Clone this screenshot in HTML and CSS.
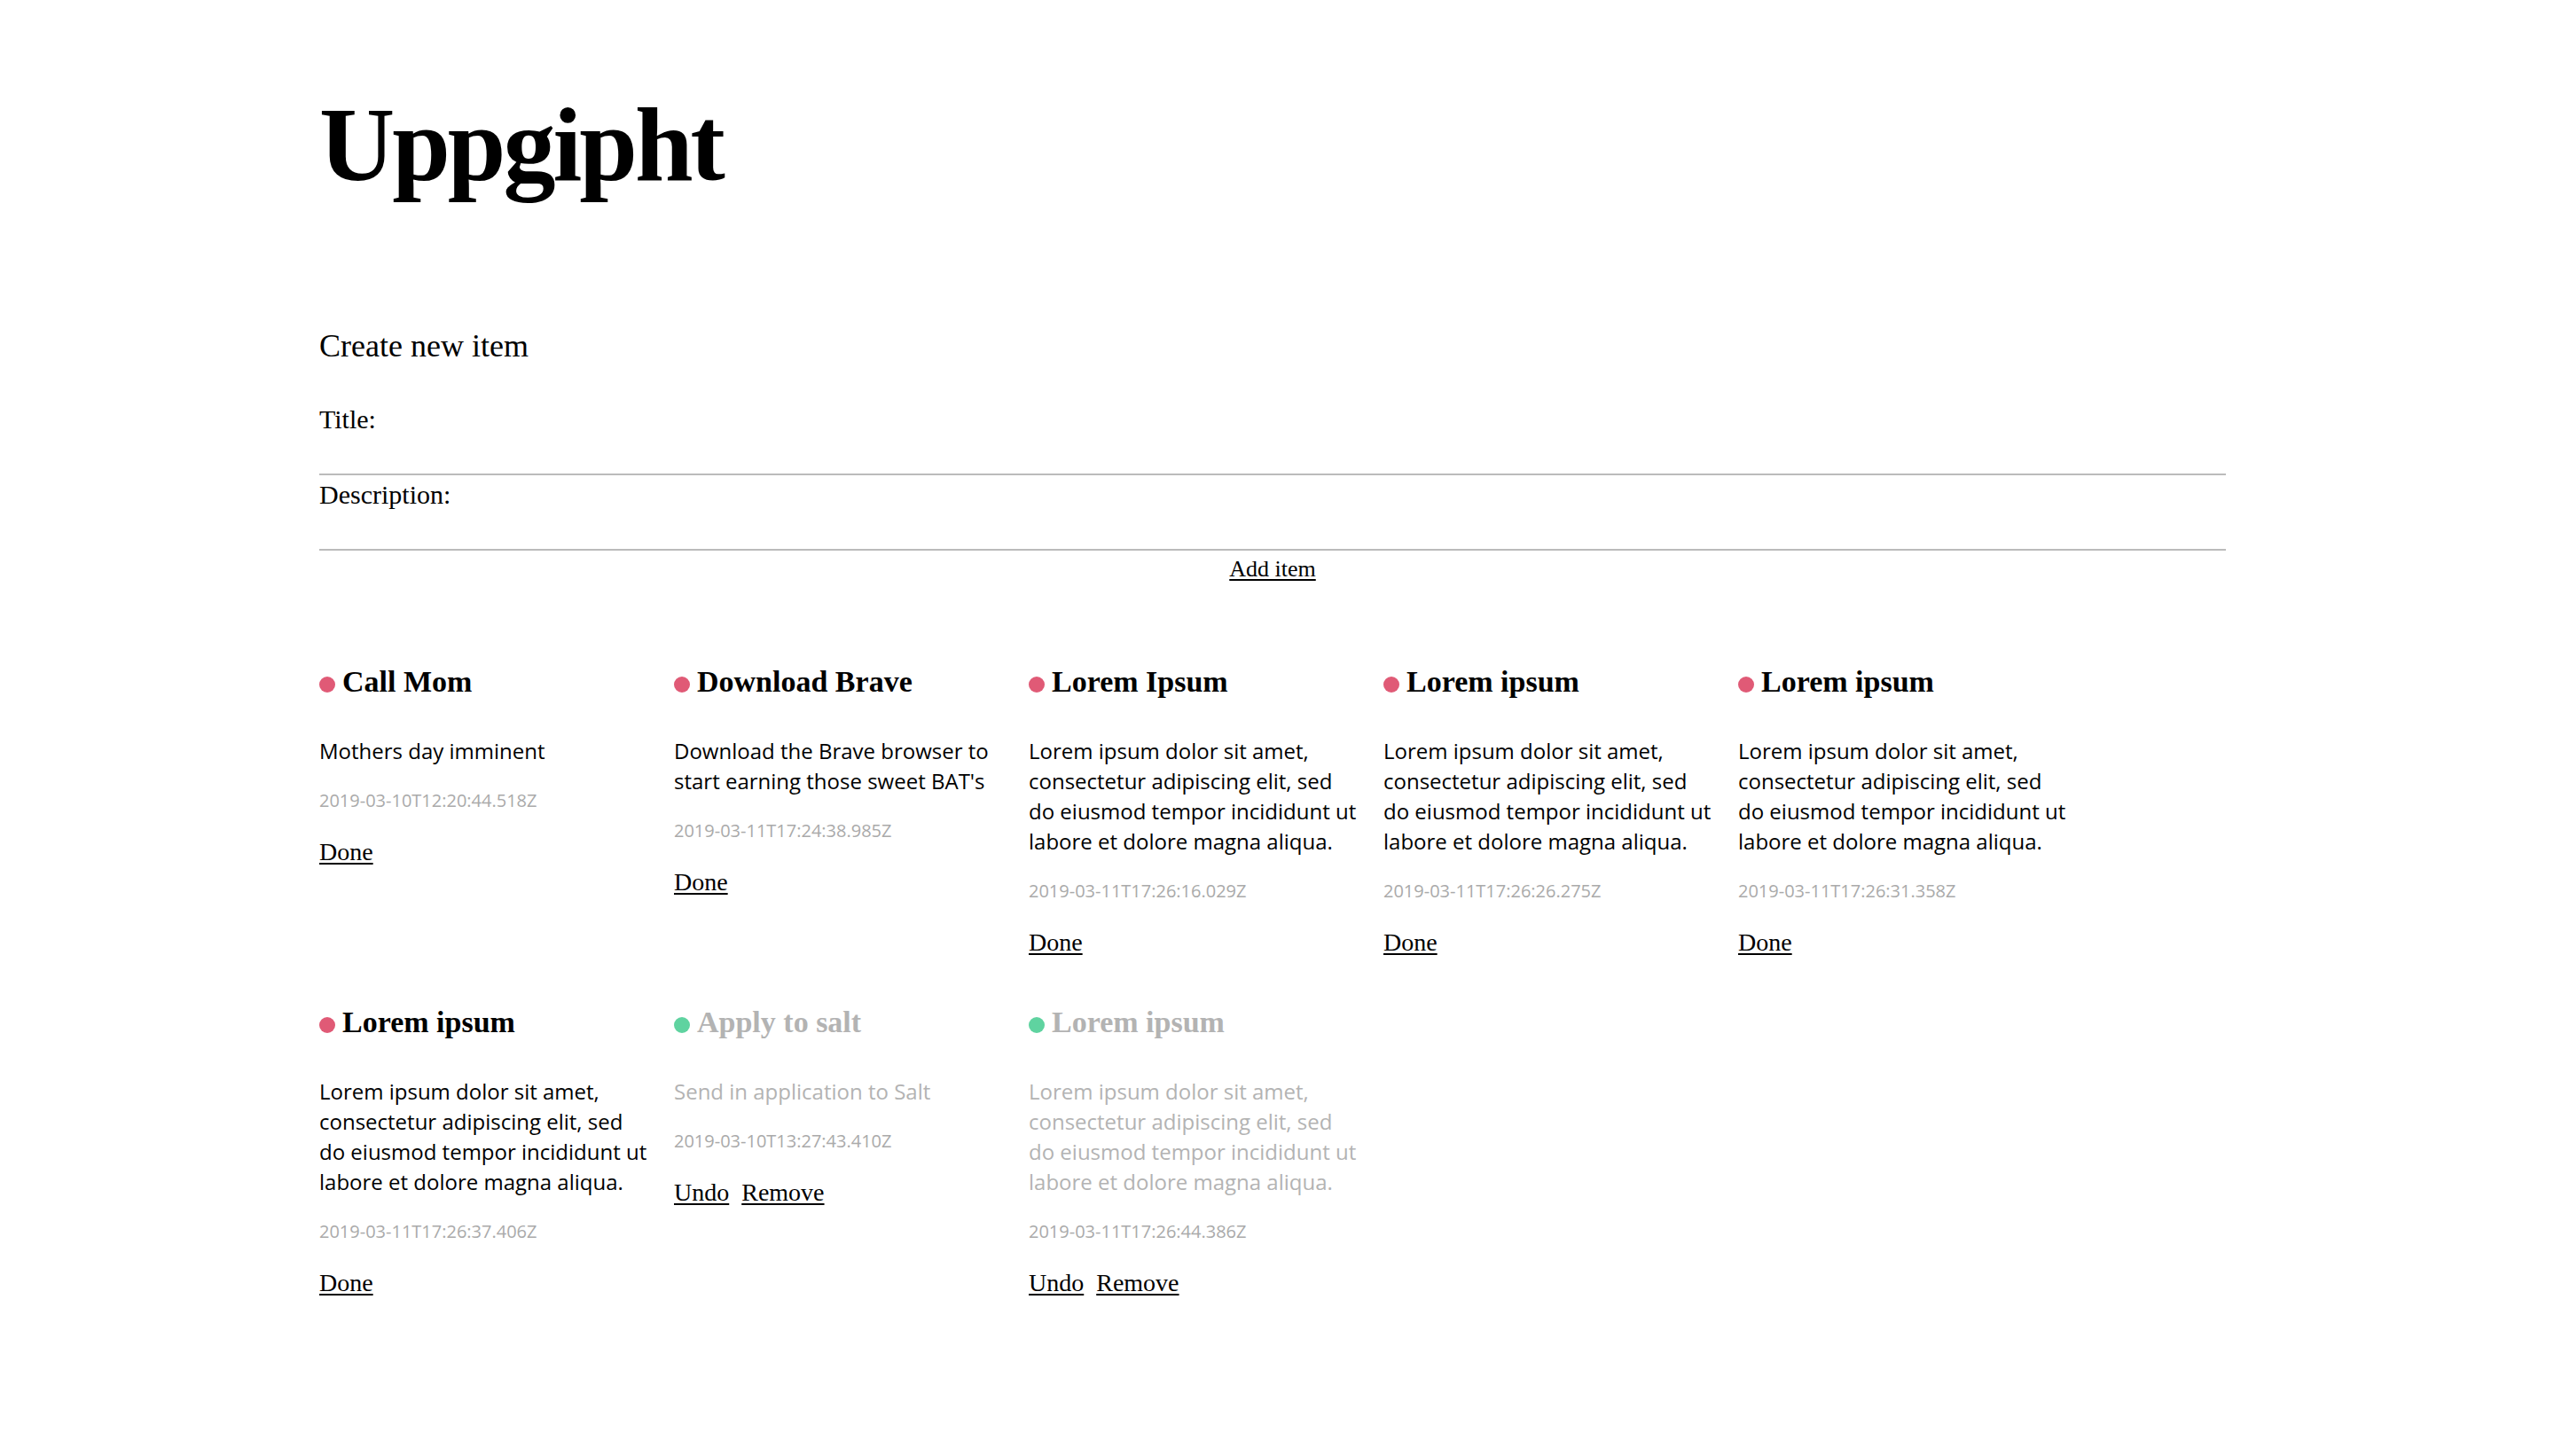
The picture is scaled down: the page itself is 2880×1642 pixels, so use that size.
FILE: index.html
```html
<!DOCTYPE html>
<html lang="en">
<head>
<meta charset="utf-8">
<title>Uppgipht</title>
<link rel="stylesheet" href="styles.css">
</head>
<body>
<main class="page">
  <h1 class="brand">Uppgipht</h1>

  <section class="create">
    <h3 class="create-title">Create new item</h3>
    <label class="field-label" for="title">Title:</label>
    <input class="field-input" id="title" type="text">
    <label class="field-label field-label-second" for="desc">Description:</label>
    <input class="field-input field-input-second" id="desc" type="text">
    <div class="create-actions"><button class="link-btn add-btn" type="button">Add item</button></div>
  </section>

  <section class="items">
    <article class="item">
      <h2 class="item-title"><span class="dot"></span>Call Mom</h2>
      <p class="item-desc">Mothers day imminent</p>
      <p class="item-date">2019-03-10T12:20:44.518Z</p>
      <div class="item-actions"><button class="link-btn" type="button">Done</button></div>
    </article>
    <article class="item">
      <h2 class="item-title"><span class="dot"></span>Download Brave</h2>
      <p class="item-desc">Download the Brave browser to start earning those sweet BAT's</p>
      <p class="item-date">2019-03-11T17:24:38.985Z</p>
      <div class="item-actions"><button class="link-btn" type="button">Done</button></div>
    </article>
    <article class="item">
      <h2 class="item-title"><span class="dot"></span>Lorem Ipsum</h2>
      <p class="item-desc">Lorem ipsum dolor sit amet, consectetur adipiscing elit, sed do eiusmod tempor incididunt ut labore et dolore magna aliqua.</p>
      <p class="item-date">2019-03-11T17:26:16.029Z</p>
      <div class="item-actions"><button class="link-btn" type="button">Done</button></div>
    </article>
    <article class="item">
      <h2 class="item-title"><span class="dot"></span>Lorem ipsum</h2>
      <p class="item-desc">Lorem ipsum dolor sit amet, consectetur adipiscing elit, sed do eiusmod tempor incididunt ut labore et dolore magna aliqua.</p>
      <p class="item-date">2019-03-11T17:26:26.275Z</p>
      <div class="item-actions"><button class="link-btn" type="button">Done</button></div>
    </article>
    <article class="item">
      <h2 class="item-title"><span class="dot"></span>Lorem ipsum</h2>
      <p class="item-desc">Lorem ipsum dolor sit amet, consectetur adipiscing elit, sed do eiusmod tempor incididunt ut labore et dolore magna aliqua.</p>
      <p class="item-date">2019-03-11T17:26:31.358Z</p>
      <div class="item-actions"><button class="link-btn" type="button">Done</button></div>
    </article>
    <article class="item">
      <h2 class="item-title"><span class="dot"></span>Lorem ipsum</h2>
      <p class="item-desc">Lorem ipsum dolor sit amet, consectetur adipiscing elit, sed do eiusmod tempor incididunt ut labore et dolore magna aliqua.</p>
      <p class="item-date">2019-03-11T17:26:37.406Z</p>
      <div class="item-actions"><button class="link-btn" type="button">Done</button></div>
    </article>
    <article class="item item-done">
      <h2 class="item-title"><span class="dot"></span>Apply to salt</h2>
      <p class="item-desc">Send in application to Salt</p>
      <p class="item-date">2019-03-10T13:27:43.410Z</p>
      <div class="item-actions"><button class="link-btn" type="button">Undo</button><button class="link-btn" type="button">Remove</button></div>
    </article>
    <article class="item item-done">
      <h2 class="item-title"><span class="dot"></span>Lorem ipsum</h2>
      <p class="item-desc">Lorem ipsum dolor sit amet, consectetur adipiscing elit, sed do eiusmod tempor incididunt ut labore et dolore magna aliqua.</p>
      <p class="item-date">2019-03-11T17:26:44.386Z</p>
      <div class="item-actions"><button class="link-btn" type="button">Undo</button><button class="link-btn" type="button">Remove</button></div>
    </article>
  </section>
</main>
</body>
</html>
```

FILE: styles.css
```css
* { box-sizing: border-box; }

html, body {
  margin: 0;
  padding: 0;
  background: #ffffff;
  color: #000000;
  font-family: "Liberation Serif", "Times New Roman", serif;
}

.page {
  width: 2150px;
  margin: 0 0 0 360px;
  padding-top: 94px;
  padding-bottom: 80px;
}

.brand {
  margin: 0;
  font-size: 118px;
  line-height: 140px;
  font-weight: 700;
  letter-spacing: -3px;
}

.create {
  margin-top: 134px;
  display: flex;
  flex-direction: column;
}

.create-title {
  margin: 0 0 43px 0;
  font-size: 36px;
  line-height: 44px;
  font-weight: 400;
}

.field-label {
  display: block;
  font-size: 30px;
  line-height: 36px;
}

.field-label-second { margin-top: 4px; }

.field-input {
  display: block;
  width: 100%;
  height: 45px;
  border: 0;
  border-bottom: 2px solid #bbbbbb;
  padding: 0;
  margin: 0;
  font-family: "Open Sans", sans-serif;
  font-size: 24px;
  outline: none;
  background: transparent;
}

.create-actions {
  display: flex;
  justify-content: center;
  margin-top: 6px;
}

.link-btn {
  background: none;
  border: 0;
  padding: 0;
  margin: 0;
  font-family: "Liberation Serif", "Times New Roman", serif;
  font-size: 28px;
  line-height: 32px;
  color: #000000;
  text-decoration: underline;
  text-decoration-thickness: 2px;
  text-underline-offset: 3px;
  cursor: pointer;
}

.add-btn {
  font-size: 26px;
  line-height: 30px;
}

.items {
  margin-top: 92px;
  display: flex;
  flex-wrap: wrap;
  row-gap: 54px;
}

.item {
  width: 370px;
  margin-right: 30px;
}

.item-title {
  margin: 0;
  font-size: 34px;
  line-height: 40px;
  font-weight: 700;
  display: flex;
  align-items: baseline;
}

.dot {
  display: inline-block;
  width: 18px;
  height: 18px;
  border-radius: 50%;
  background: #e05a76;
  margin-right: 8px;
  flex: none;
  align-self: flex-end;
  margin-bottom: 8px;
}

.item-desc {
  margin: 41px 0 0 0;
  font-family: "Open Sans", sans-serif;
  font-size: 24px;
  line-height: 34px;
}

.item-date {
  margin: 26px 0 0 0;
  font-family: "Open Sans", sans-serif;
  font-size: 20px;
  line-height: 26px;
  color: #aaaaaa;
}

.item-actions {
  margin-top: 29px;
  display: flex;
  gap: 14px;
}

.item-done .item-title,
.item-done .item-desc {
  color: #b3b3b3;
}

.item-done .dot {
  background: #5fd3a0;
}
```
